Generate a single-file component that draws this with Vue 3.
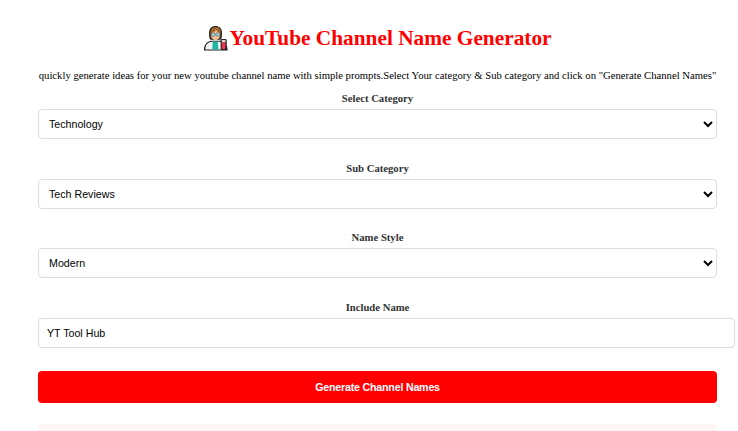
<template>
  <div class="page">
    <h1 class="title">
      <svg class="emoji" viewBox="0 0 28 28" aria-hidden="true">
        <path d="M1 27.500c0-6 2.500-9.500 7.500-10.500h10c5 1 8 4.500 8 10.500z" fill="#222" />
        <path d="M2.500 26.300c0-5 2.500-7.800 7-8.300h8c4.500 .5 7 3.300 7 8.300z" fill="#f1f3f4" />
        <path d="M10.500 18h5.500l.5 8.300h-6.500z" fill="#1fb5a0" />
        <path d="M6.500 8.500C6.500 3.500 9.500 1 13.500 1s7 2.500 7 7.500c0 3 0 5-1.500 7.500H8c-1.500-2.500-1.500-4.500-1.500-7.500z" fill="#222" />
        <path d="M8 9c0-4 2-6.700 5.500-6.700S19 5 19 9c0 2.500 0 4-1 5.500H9C8 13 8 11.500 8 9z" fill="#a5652a" />
        <ellipse cx="13.500" cy="10.500" rx="4.600" ry="5.600" fill="#f4c59a" />
        <path d="M8.500 8.500c2.500 0 4.500-1 5.500-3 1 1.500 2.500 2.700 4.500 3l.5-3-2.500-3h-5L8.500 5z" fill="#a5652a" />
        <rect x="9" y="8.500" width="4" height="3.400" rx="1.200" fill="#9fd8ee" stroke="#444" stroke-width=".6" />
        <rect x="14" y="8.500" width="4" height="3.400" rx="1.200" fill="#9fd8ee" stroke="#444" stroke-width=".6" />
        <rect x="19" y="15" width="6.500" height="12" rx="1.500" fill="#222" />
        <rect x="20.200" y="18.500" width="4" height="7.300" rx="1" fill="#e8344e" />
        <rect x="20.200" y="16.200" width="4" height="2.300" fill="#f6d5d8" />
      </svg>YouTube Channel Name Generator
    </h1>
    <p class="intro">quickly generate ideas for your new youtube channel name with simple prompts.Select Your category &amp; Sub category and click on "Generate Channel Names"</p>

    <div class="field" v-for="item in selects" :key="item.label">
      <label>{{ item.label }}</label>
      <select v-model="item.value">
        <option v-for="opt in item.options" :key="opt">{{ opt }}</option>
      </select>
    </div>

    <div class="field">
      <label>Include Name</label>
      <input v-model="includeName" type="text" />
    </div>

    <button class="generate" type="button">Generate Channel Names</button>
    <div class="results"></div>
  </div>
</template>

<script setup>
import { reactive, ref } from "vue";

const selects = reactive([
  { label: "Select Category", value: "Technology", options: ["Technology", "Gaming", "Education"] },
  { label: "Sub Category", value: "Tech Reviews", options: ["Tech Reviews", "Tutorials", "Unboxing"] },
  { label: "Name Style", value: "Modern", options: ["Modern", "Classic", "Funny"] },
]);

const includeName = ref("YT Tool Hub");
</script>

<style>
html,
body {
  margin: 0;
  background: #fff;
  overflow: hidden;
}
</style>

<style scoped>
.page {
  display: flex;
  flex-direction: column;
  width: 679px;
  height: 431px;
  margin-left: 38px;
  padding-top: 22px;
  box-sizing: border-box;
  font-family: "Liberation Serif", "Times New Roman", serif;
  color: #000;
}

.title {
  display: flex;
  align-items: center;
  justify-content: center;
  flex: none;
  margin: 0;
  height: 32px;
  font-size: 21.33px;
  font-weight: bold;
  color: #f00;
}

.emoji {
  width: 26px;
  height: 26px;
}

.intro {
  flex: none;
  margin: 15px 0 0;
  font-size: 10.67px;
  line-height: 13px;
  white-space: nowrap;
  text-align: center;
}

.field {
  flex: none;
  margin-bottom: 22.500px;
}

.intro + .field {
  margin-top: 10.400px;
}

label {
  display: block;
  margin-bottom: 4.500px;
  font-size: 10.67px;
  line-height: 12.500px;
  font-weight: bold;
  color: #333;
  text-align: center;
}

select {
  display: block;
  width: 100%;
  height: 30px;
  padding: 0 4px 0 6px;
  border: 1px solid #ddd;
  border-radius: 4px;
  background: #fff;
  font-family: "Liberation Sans", Arial, sans-serif;
  font-size: 10.67px;
  color: #000;
}

input {
  display: block;
  box-sizing: content-box;
  width: 100%;
  height: 12px;
  padding: 8px;
  border: 1px solid #ddd;
  border-radius: 4px;
  background: #fff;
  font-family: "Liberation Sans", Arial, sans-serif;
  font-size: 10.67px;
  color: #000;
}

.generate {
  display: block;
  flex: none;
  width: 100%;
  height: 32px;
  margin-top: 0.600px;
  border: none;
  border-radius: 4px;
  background: #f00;
  color: #fff;
  font-family: "Liberation Sans", Arial, sans-serif;
  font-size: 10.67px;
  font-weight: bold;
  letter-spacing: -0.2px;
}

.results {
  flex: 1;
  margin-top: 21px;
  border-radius: 4px 4px 0 0;
  background: #fff5f7;
}
</style>
